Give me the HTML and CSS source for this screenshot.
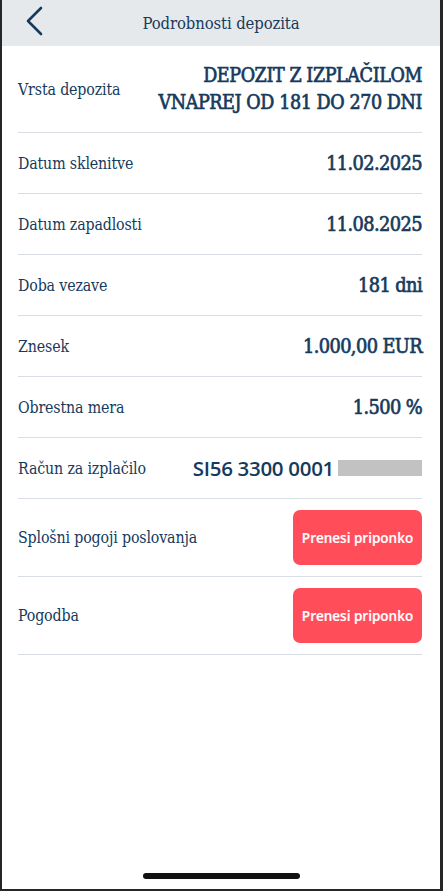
FILE: index.html
```html
<!DOCTYPE html>
<html lang="sl">
<head>
<meta charset="utf-8">
<link rel="stylesheet" href="styles.css">
</head>
<body>
<div class="frame">
  <header class="topbar">
    <button class="back" aria-label="Nazaj">
      <svg width="20" height="30" viewBox="0 0 20 30"><path d="M17 2 L4 15 L17 28" fill="none" stroke="#163a5c" stroke-width="2.6" stroke-linecap="round" stroke-linejoin="round"/></svg>
    </button>
    <h1 class="title">Podrobnosti depozita</h1>
  </header>
  <main class="list">
    <div class="row row-tall">
      <span class="label">Vrsta depozita</span>
      <span class="value upper">DEPOZIT Z IZPLAČILOM<br>VNAPREJ OD 181 DO 270 DNI</span>
    </div>
    <div class="row">
      <span class="label">Datum sklenitve</span>
      <span class="value">11.02.2025</span>
    </div>
    <div class="row">
      <span class="label">Datum zapadlosti</span>
      <span class="value">11.08.2025</span>
    </div>
    <div class="row">
      <span class="label">Doba vezave</span>
      <span class="value">181 dni</span>
    </div>
    <div class="row">
      <span class="label">Znesek</span>
      <span class="value">1.000,00 EUR</span>
    </div>
    <div class="row">
      <span class="label">Obrestna mera</span>
      <span class="value">1.500 %</span>
    </div>
    <div class="row">
      <span class="label">Račun za izplačilo</span>
      <span class="value iban">SI56 3300 0001<span class="mask"></span></span>
    </div>
    <div class="row row-btn">
      <span class="label">Splošni pogoji poslovanja</span>
      <button class="dl">Prenesi priponko</button>
    </div>
    <div class="row row-btn">
      <span class="label">Pogodba</span>
      <button class="dl">Prenesi priponko</button>
    </div>
  </main>
  <div class="home"></div>
</div>
</body>
</html>
```
FILE: styles.css
```css
* { box-sizing: border-box; }
html, body { margin: 0; padding: 0; background: #262626; }
body { width: 443px; height: 891px; overflow: hidden; }
.frame {
  width: 443px; height: 891px;
  background: #fff;
  border-left: 2px solid #262626;
  border-right: 3px solid #262626;
  border-bottom: 2px solid #262626;
  display: flex; flex-direction: column;
  color: #163a5c;
  font-family: "DejaVu Serif Condensed", "DejaVu Serif", serif;
}
.topbar {
  height: 46px; flex: none;
  background: #e6e9ec;
  display: flex; align-items: center; justify-content: center;
  position: relative;
}
.back {
  position: absolute; left: 22px; top: 6px;
  background: none; border: 0; padding: 0; width: 20px; height: 30px;
}
.title { margin: 0; font-size: 16.5px; font-weight: normal; letter-spacing: -0.1px; }
.list { padding: 0 18px 0 16px; display: flex; flex-direction: column; }
.row {
  height: 61px;
  display: flex; align-items: center; justify-content: space-between;
  border-bottom: 1.5px solid #d8dee4;
}
.row-tall { height: 87px; }
.row-btn { height: 78px; }
.label { font-size: 15.8px; letter-spacing: -0.15px; }
.value { font-size: 19.8px; font-weight: normal; -webkit-text-stroke: 0.65px #163a5c; text-align: right; letter-spacing: -0.6px; }
.upper { line-height: 27px; font-size: 19.5px; letter-spacing: -0.4px; }
.iban { font-family: "Open Sans", sans-serif; font-weight: 600; -webkit-text-stroke: 0; font-size: 20.5px; letter-spacing: -0.3px; display: flex; align-items: center; }
.mask { display: inline-block; width: 84px; height: 16px; background: #c2c2c2; margin-left: 4px; }
.dl {
  width: 129px; height: 55px; padding: 0; white-space: nowrap;
  background: #ff4d5a; color: #fff; border: 0; border-radius: 7px;
  font-family: "Open Sans", sans-serif; font-weight: 600; font-size: 13.5px;
  -webkit-text-stroke: 0.2px #fff;
}
.home {
  margin-top: auto; margin-bottom: 10px; align-self: center;
  width: 157px; height: 6px; border-radius: 3px; background: #111;
}
```
